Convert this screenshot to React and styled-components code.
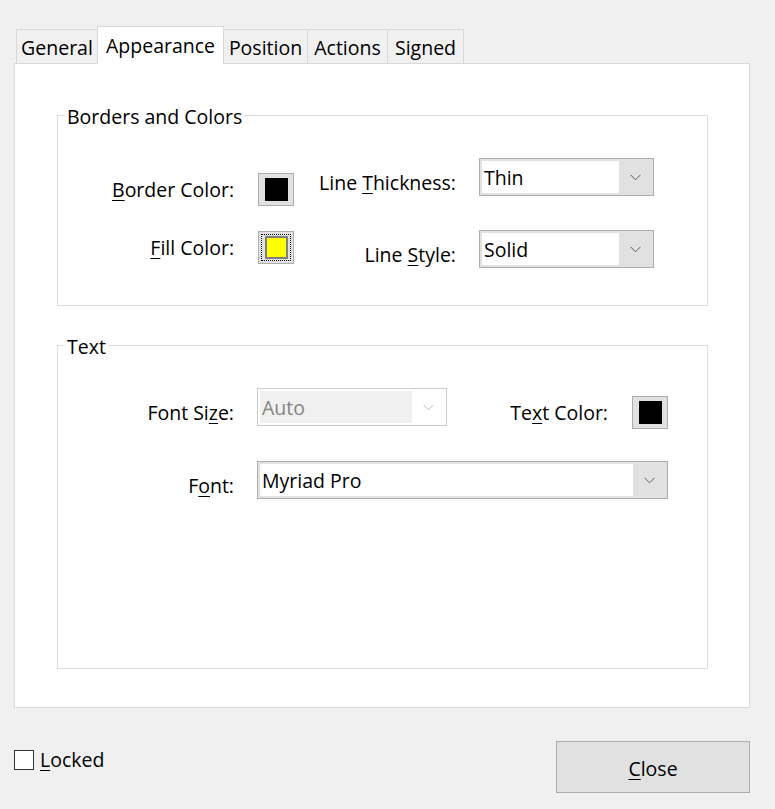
import styled, { createGlobalStyle } from "styled-components";

const GlobalStyle = createGlobalStyle`
    html, body {
        margin: 0;
        padding: 0;
        background: #f0f0f0;
    }
    body {
        font-family: "Open Sans", "Noto Sans", sans-serif;
        font-size: 19.5px;
        color: #000;
    }
    u {
        text-underline-offset: 3px;
        text-decoration-thickness: 1px;
    }
`;

const Window = styled.div`
    width: 775px;
    height: 809px;
    box-sizing: border-box;
    padding: 26px 25px 0 14px;
`;

const TabStrip = styled.div`
    display: flex;
    align-items: flex-end;
    height: 38px;
    padding-left: 2px;
    margin-bottom: -1px;
    position: relative;
    z-index: 1;
`;

const Tab = styled.div`
    box-sizing: border-box;
    display: flex;
    align-items: center;
    justify-content: center;
    width: ${(p) => p.$width}px;
    height: ${(p) => (p.$active ? 38 : 35)}px;
    margin-left: -1px;
    border: 1px solid #d9d9d9;
    border-bottom: ${(p) => (p.$active ? "none" : "1px solid #d9d9d9")};
    background: ${(p) => (p.$active ? "#fff" : "#f0f0f0")};
    padding-top: ${(p) => (p.$active ? 1 : 3)}px;
    line-height: 1;
    white-space: nowrap;
    &:first-child {
        margin-left: 0;
    }
`;

const Panel = styled.div`
    box-sizing: border-box;
    width: 736px;
    height: 645px;
    background: #fff;
    border: 1px solid #d9d9d9;
    padding: 39px 0 0 42px;
    display: flex;
    flex-direction: column;
    gap: 27px;
`;

const Group = styled.fieldset`
    box-sizing: border-box;
    width: 651px;
    height: ${(p) => p.$height}px;
    margin: 0;
    padding: 0;
    border: 1px solid #dcdcdc;
    min-inline-size: 0;
`;

const Legend = styled.legend`
    margin-left: 7px;
    padding: 4px 2px 0;
    line-height: 20px;
`;

const Grid = styled.div`
    display: grid;
    grid-template-columns: ${(p) => p.$cols};
    grid-template-rows: ${(p) => p.$rows};
    row-gap: ${(p) => p.$rowGap}px;
    margin-top: 31px;
`;

const Label = styled.div`
    align-self: start;
    justify-self: end;
    margin-top: ${(p) => p.$top}px;
    padding-right: ${(p) => p.$gap}px;
    line-height: 24px;
    white-space: nowrap;
`;

const Swatch = styled.div`
    box-sizing: border-box;
    align-self: start;
    margin-top: ${(p) => p.$top}px;
    width: 36px;
    height: 33px;
    border: 1px solid #adadad;
    background: #e1e1e1;
    display: flex;
    align-items: center;
    justify-content: center;
    position: relative;
`;

const FocusRing = styled.div`
    position: absolute;
    inset: 2px;
    border: 1px dotted #000;
`;

const Chip = styled.div`
    box-sizing: border-box;
    width: 23px;
    height: 23px;
    background: ${(p) => p.$color};
    border: ${(p) => (p.$focused ? "2px solid #7f7f7f" : "none")};
`;

const Combo = styled.div`
    box-sizing: border-box;
    align-self: start;
    grid-column: ${(p) => p.$span || "auto"};
    height: 38px;
    display: flex;
    padding: 2px;
    border: 1px solid ${(p) => (p.$disabled ? "#cccccc" : "#adadad")};
    background: ${(p) => (p.$disabled ? "#fff" : "#e1e1e1")};
`;

const ComboField = styled.div`
    flex: 1;
    display: flex;
    align-items: center;
    padding-left: 2px;
    background: ${(p) => (p.$disabled ? "#f0f0f0" : "#fff")};
    color: ${(p) => (p.$disabled ? "#838383" : "#000")};
`;

const Arrow = styled.div`
    width: 32px;
    display: flex;
    align-items: center;
    justify-content: center;
`;

const Footer = styled.div`
    display: flex;
    justify-content: space-between;
    align-items: flex-start;
    margin-top: 33px;
`;

const Check = styled.label`
    display: flex;
    align-items: center;
    gap: 6px;
    margin-top: 8px;
    line-height: 22px;
`;

const Box = styled.span`
    box-sizing: border-box;
    width: 20px;
    height: 20px;
    border: 1px solid #333;
    background: #fff;
`;

const Button = styled.button`
    box-sizing: border-box;
    width: 194px;
    height: 52px;
    border: 1px solid #adadad;
    background: #e1e1e1;
    font: inherit;
    color: #000;
    padding: 3px 0 0;
`;

function Chevron({ disabled }) {
    return (
        <svg width="11" height="7" viewBox="0 0 11 7">
            <polyline
                points="0.5,0.8 5.5,5.8 10.5,0.8"
                fill="none"
                stroke={disabled ? "#bcbcbc" : "#606060"}
                strokeWidth="1"
            />
        </svg>
    );
}

function Select({ value, disabled, span }) {
    return (
        <Combo $disabled={disabled} $span={span}>
            <ComboField $disabled={disabled}>{value}</ComboField>
            <Arrow>
                <Chevron disabled={disabled} />
            </Arrow>
        </Combo>
    );
}

const tabs = [
    { title: "General", width: 82 },
    { title: "Appearance", width: 127, active: true },
    { title: "Position", width: 85 },
    { title: "Actions", width: 81 },
    { title: "Signed", width: 77 },
];

export default function App() {
    return (
        <Window>
            <GlobalStyle />
            <TabStrip>
                {tabs.map((t) => (
                    <Tab key={t.title} $width={t.width} $active={t.active}>
                        {t.title}
                    </Tab>
                ))}
            </TabStrip>
            <Panel>
                <Group $height={203}>
                    <Legend>Borders and Colors</Legend>
                    <Grid
                        $cols="200px 36px 185px 175px"
                        $rows="48px 38px"
                        $rowGap={24}
                    >
                        <Label $top={20} $gap={24}>
                            <u>B</u>order Color:
                        </Label>
                        <Swatch $top={15}>
                            <Chip $color="#000" />
                        </Swatch>
                        <Label $top={13} $gap={23}>
                            Line <u>T</u>hickness:
                        </Label>
                        <Select value="Thin" />

                        <Label $top={6} $gap={24}>
                            <u>F</u>ill Color:
                        </Label>
                        <Swatch $top={1}>
                            <FocusRing />
                            <Chip $color="#ffff00" $focused />
                        </Swatch>
                        <Label $top={13} $gap={23}>
                            Line <u>S</u>tyle:
                        </Label>
                        <Select value="Solid" />
                    </Grid>
                </Group>

                <Group $height={336}>
                    <Legend>Text</Legend>
                    <Grid
                        $cols="199px 190px 185px 36px"
                        $rows="39px 37px"
                        $rowGap={34}
                    >
                        <Label $top={13} $gap={23}>
                            Font Si<u>z</u>e:
                        </Label>
                        <Select value="Auto" disabled />
                        <Label $top={13} $gap={24}>
                            Te<u>x</u>t Color:
                        </Label>
                        <Swatch $top={8}>
                            <Chip $color="#000" />
                        </Swatch>

                        <Label $top={13} $gap={23}>
                            F<u>o</u>nt:
                        </Label>
                        <Select value="Myriad Pro" span="2 / 5" />
                    </Grid>
                </Group>
            </Panel>
            <Footer>
                <Check>
                    <Box />
                    <span>
                        <u>L</u>ocked
                    </span>
                </Check>
                <Button type="button">
                    <u>C</u>lose
                </Button>
            </Footer>
        </Window>
    );
}
